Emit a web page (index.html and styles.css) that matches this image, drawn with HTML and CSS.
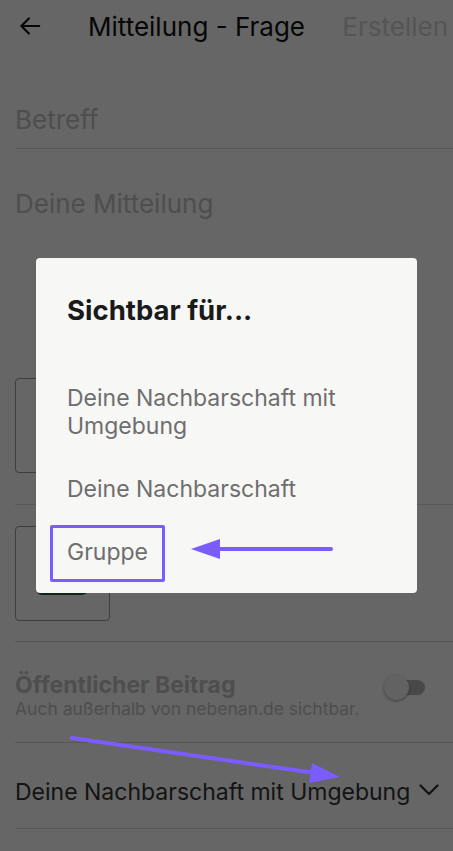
FILE: index.html
```html
<!DOCTYPE html>
<html lang="de">
<head>
  <meta charset="UTF-8" />
  <meta name="viewport" content="width=device-width, initial-scale=1.0"/>
  <title>Mitteilung - Frage</title>
  <link rel="stylesheet" href="styles.css">
</head>
<body>
  <div class="page">
    <header class="topbar">
      <button class="back" aria-label="Zurück">
        <svg width="26" height="26" viewBox="0 0 24 24"><path d="M20.5 12H4.5M11 5l-7 7 7 7" fill="none" stroke="#111" stroke-width="2" stroke-linecap="round" stroke-linejoin="round"/></svg>
      </button>
      <h1>Mitteilung - Frage</h1>
      <span class="create">Erstellen</span>
    </header>

    <div class="field field-subject">Betreff</div>
    <div class="field field-message">Deine Mitteilung</div>

    <div class="attach">
      <div class="thumb"></div>
    </div>
    <div class="attach">
      <div class="thumb"><span class="thumb-btn"></span></div>
    </div>

    <div class="row public">
      <div>
        <div class="public-title">Öffentlicher Beitrag</div>
        <div class="public-sub">Auch außerhalb von nebenan.de sichtbar.</div>
      </div>
      <span class="toggle"><span class="knob"></span></span>
    </div>

    <div class="row select">
      <span>Deine Nachbarschaft mit Umgebung</span>
      <svg width="20" height="20" viewBox="0 0 20 20"><path d="M1.5 5.5l8.5 8.5 8.5-8.5" fill="none" stroke="#333" stroke-width="2.4" stroke-linecap="round" stroke-linejoin="round"/></svg>
    </div>
  </div>

  <div class="scrim">
    <div class="dialog">
      <h2>Sichtbar für...</h2>
      <ul class="options">
        <li>Deine Nachbarschaft mit Umgebung</li>
        <li>Deine Nachbarschaft</li>
        <li class="picked">Gruppe</li>
      </ul>
    </div>
  </div>

  <!-- annotations drawn over the screenshot -->
  <svg class="marks" width="453" height="851" viewBox="0 0 453 851">
    <line x1="331" y1="549" x2="212" y2="549" stroke="#7b5cff" stroke-width="4" stroke-linecap="round"/>
    <polygon points="191,549 220,539 220,559" fill="#7b5cff"/>
    <line x1="72" y1="738" x2="315" y2="773" stroke="#7b5cff" stroke-width="4" stroke-linecap="round"/>
    <polygon points="340,777 312,763 309,783" fill="#7b5cff"/>
  </svg>
</body>
</html>
```

FILE: styles.css
```css
body {
  margin: 0;
  font-family: Inter, "Noto Sans", sans-serif;
  background-color: #fff;
  color: #222;
  width: 453px;
  height: 851px;
  overflow: hidden;
  position: relative;
}
.page {
  padding: 0 0 0 15px;
}
.topbar {
  display: flex;
  align-items: center;
  height: 52px;
  margin-left: -15px;
}
.back {
  background: none;
  border: none;
  padding: 0;
  width: 60px;
  height: 52px;
  display: flex;
  align-items: center;
  justify-content: center;
}
.topbar h1 {
  margin: 0 0 0 28px;
  font-size: 26px;
  font-weight: 400;
  color: #111;
  flex: 1;
}
.create {
  font-size: 26px;
  color: #d4d4d4;
  margin-right: 5px;
}
.field {
  font-size: 26px;
  line-height: 31px;
  color: #c4c4c4;
}
.field-subject {
  padding-top: 52px;
  padding-bottom: 13px;
  border-bottom: 1px solid #d9d9d9;
}
.field-message {
  padding-top: 39px;
  height: 190px;
}
.attach {
  padding: 0 0 31px;
  border-bottom: 1px solid #d9d9d9;
}
.attach + .attach {
  padding: 21px 0 20px;
}
.thumb {
  width: 93px;
  height: 93px;
  border: 1px solid #9a9a9a;
  border-radius: 4px;
  position: relative;
}
.thumb-btn {
  position: absolute;
  left: 20px;
  top: 44px;
  width: 52px;
  height: 24px;
  border-radius: 6px;
  background-color: #2f5e3d;
}
.row {
  display: flex;
  justify-content: space-between;
  border-bottom: 1px solid #d9d9d9;
  box-sizing: border-box;
}
.public {
  height: 101px;
  padding: 30px 28px 0 0;
}
.public-title {
  font-size: 23px;
  line-height: 26px;
  font-weight: 700;
  color: #c2c2c2;
}
.public-sub {
  margin-top: 1px;
  font-size: 17.5px;
  line-height: 20px;
  color: #c2c2c2;
}
.toggle {
  position: relative;
  width: 34px;
  height: 15px;
  border-radius: 8px;
  background-color: #b7b7b7;
  margin-top: 8px;
}
.knob {
  position: absolute;
  left: -7px;
  top: -5px;
  width: 25px;
  height: 25px;
  border-radius: 50%;
  background-color: #f4f4f4;
  box-shadow: 0 1px 3px rgba(0, 0, 0, 0.4);
}
.select {
  height: 86px;
  padding: 35px 14px 0 0;
  font-size: 23px;
  line-height: 28px;
  color: #333;
}
.select svg {
  margin-top: 2px;
}
.scrim {
  position: absolute;
  inset: 0;
  background-color: rgba(0, 0, 0, 0.6);
  display: flex;
  align-items: center;
  justify-content: center;
}
.dialog {
  width: 381px;
  height: 335px;
  box-sizing: border-box;
  background-color: #f7f7f5;
  border-radius: 4px;
  padding: 36px 31px 0;
}
.dialog h2 {
  margin: 0;
  font-size: 27.5px;
  line-height: 32px;
  font-weight: 700;
  color: #1a1a1a;
}
.options {
  list-style: none;
  margin: 58px 0 0;
  padding: 0;
  font-size: 23px;
  line-height: 28px;
  color: #6e6e6e;
}
.options li {
  margin-bottom: 35px;
}
.picked {
  display: inline-block;
  position: relative;
}
.picked::before {
  content: "";
  position: absolute;
  left: -17px;
  top: -13px;
  width: 115px;
  height: 57px;
  box-sizing: border-box;
  border: 3px solid #7b5cff;
  border-radius: 2px;
}
.marks {
  position: absolute;
  left: 0;
  top: 0;
}
```
